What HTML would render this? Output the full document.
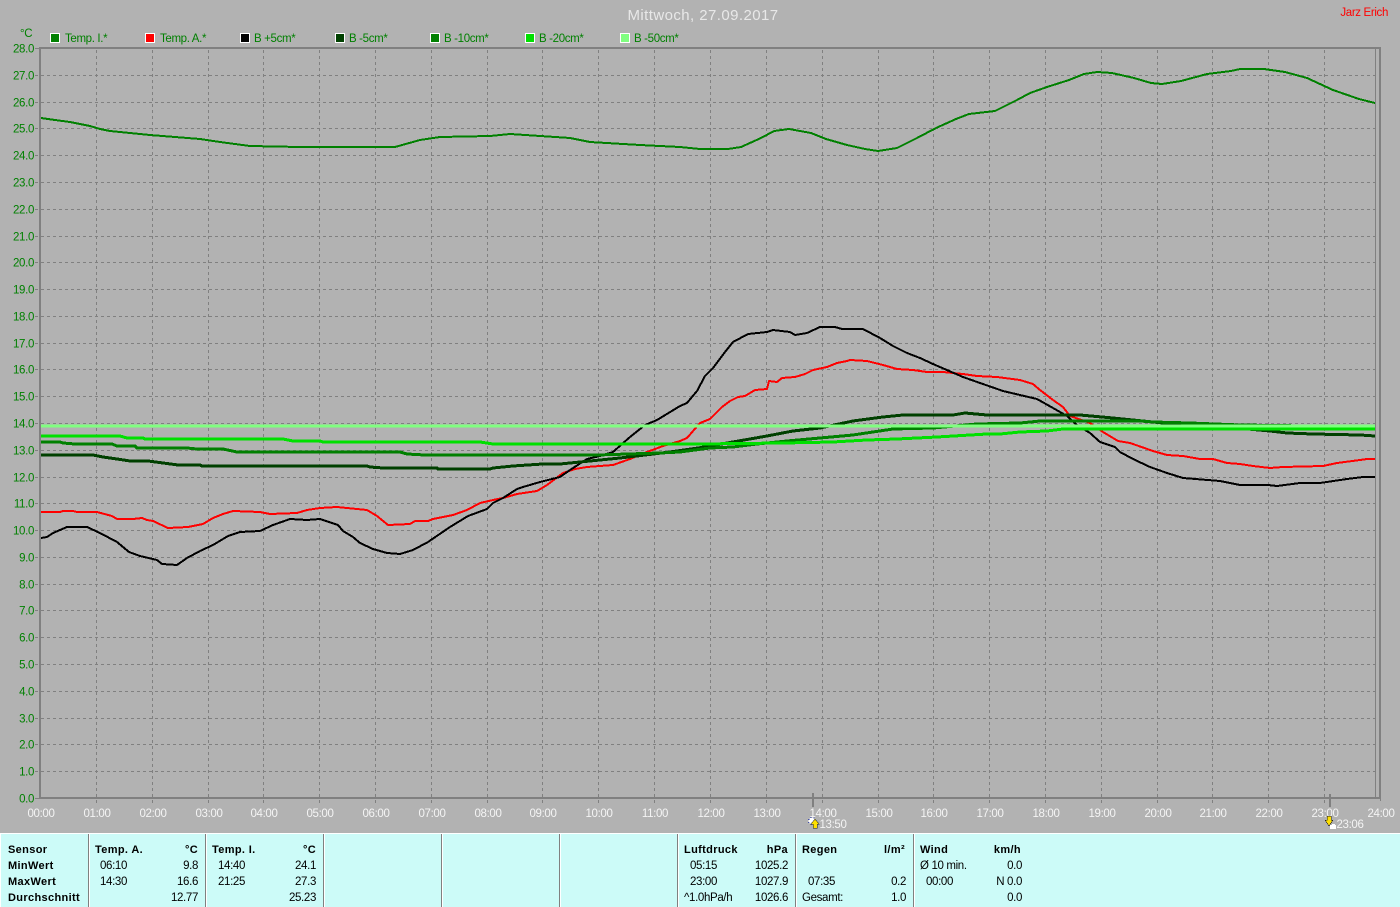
<!DOCTYPE html>
<html><head><meta charset="utf-8"><title>Mittwoch, 27.09.2017</title>
<style>
html,body{margin:0;padding:0;background:#b2b2b2;width:1400px;height:907px;overflow:hidden}
svg{display:block;position:absolute;left:0;top:0}
text{font-family:"Liberation Sans",sans-serif;font-size:11.5px;letter-spacing:-.35px}
.y text,.l text{fill:#008000}
.t text{fill:#f4f4f4;text-anchor:middle}
.y text{text-anchor:end}
.c polyline{fill:none;shape-rendering:crispEdges;stroke-linejoin:round}
.p text{fill:#000}
.p .b{font-weight:bold;letter-spacing:.35px;font-size:11px}
.p .r{text-anchor:end}
</style></head><body>
<svg width="1400" height="907" viewBox="0 0 1400 907" xmlns="http://www.w3.org/2000/svg">
<rect width="1400" height="907" fill="#b2b2b2"/>
<!-- grid -->
<path shape-rendering="crispEdges" stroke="#808080" stroke-width="1" stroke-dasharray="3 3" fill="none" d="
M35 75.5H1380M35 102.5H1380M35 128.5H1380M35 155.5H1380M35 182.5H1380M35 209.5H1380M35 236.5H1380M35 262.5H1380M35 289.5H1380M35 316.5H1380M35 343.5H1380M35 369.5H1380M35 396.5H1380M35 423.5H1380M35 450.5H1380M35 477.5H1380M35 503.5H1380M35 530.5H1380M35 557.5H1380M35 584.5H1380M35 610.5H1380M35 637.5H1380M35 664.5H1380M35 691.5H1380M35 718.5H1380M35 744.5H1380M35 771.5H1380
M96.5 50V803M152.5 50V803M208.5 50V803M263.5 50V803M319.5 50V803M375.5 50V803M431.5 50V803M487.5 50V803M542.5 50V803M598.5 50V803M654.5 50V803M710.5 50V803M766.5 50V803M822.5 50V803M878.5 50V803M933.5 50V803M989.5 50V803M1045.5 50V803M1101.5 50V803M1157.5 50V803M1212.5 50V803M1268.5 50V803M1324.5 50V803M1380.5 798V803"/>
<path shape-rendering="crispEdges" stroke="#808080" stroke-width="1" fill="none" d="M35 48.5H39M35 798.5H39M1375.5 48V798"/>
<path shape-rendering="crispEdges" fill="#808080" d="M39 47H1381V49H41V797H1379V49H1381V799H39Z"/>
<!-- curves -->
<g class="c">
<polyline stroke="#008000" stroke-width="2" points="41,118 55,120 70,122 90,126 100,129 110,131 150,135 200,139 220,142 250,146 300,147 395,147 420,140 440,137 490,136 510,134 540,136 570,138 590,142 640,145 680,147 700,149 728,149 741,147 761,138 774,131 789,129 811,133 826,139 847,145 865,149 878,151 897,148 917,138 936,128 956,119 969,114 995,111 1017,100 1030,93 1047,87 1069,80 1084,74 1097,72 1112,73 1134,78 1151,83 1162,84 1181,81 1207,74 1231,71 1240,69 1264,69 1285,72 1307,78 1333,90 1359,99 1375,103"/>
<polyline stroke="#ff0000" stroke-width="2" points="41,512 60,512 63,511 73,511 77,512 97,512 112,516 117,519 133,519 142,518 147,520 153,521 168,528 188,527 203,524 213,518 223,514 233,511 260,512 270,514 297,513 307,510 320,508 337,507 357,509 367,510 377,516 388,525 410,524 415,521 428,521 433,519 453,515 467,510 480,503 493,500 503,498 517,494 537,491 547,485 563,473 575,469 587,467 613,465 630,459 647,452 663,446 680,441 687,438 700,423 710,419 722,407 730,401 738,397 745,396 755,390 767,389 769,381 777,382 782,378 795,377 805,374 813,370 827,367 837,363 847,361 850,360 867,361 883,365 897,369 913,370 927,372 943,372 963,374 977,376 997,377 1020,380 1033,384 1040,390 1053,400 1063,407 1070,416 1090,423 1103,432 1118,441 1130,443 1153,451 1167,455 1183,456 1200,459 1213,459 1227,463 1240,464 1253,466 1270,468 1283,467 1323,466 1337,463 1360,460 1367,459 1375,459"/>
<polyline stroke="#000000" stroke-width="2" points="41,538 47,537 53,533 67,527 87,527 100,533 117,542 129,552 140,556 157,560 162,564 177,565 187,558 200,551 213,545 228,536 240,532 260,531 273,525 290,519 307,520 320,519 338,525 343,531 353,537 360,543 373,549 387,553 400,554 413,550 428,542 450,527 468,516 487,509 493,503 503,498 517,489 523,487 540,482 560,477 570,470 587,459 600,456 613,452 630,437 645,425 657,420 680,406 687,403 697,391 705,376 713,368 725,352 733,342 748,334 767,332 773,330 790,332 795,335 807,333 820,327 835,327 842,329 863,329 880,338 893,346 907,353 920,358 933,364 963,377 980,383 1003,391 1020,395 1037,399 1053,408 1067,416 1077,425 1090,433 1100,442 1115,447 1120,452 1133,459 1150,467 1167,473 1183,478 1220,481 1240,485 1268,485 1277,486 1300,483 1320,483 1347,479 1363,477 1375,477"/>
<polyline stroke="#004000" stroke-width="3" points="41,455 93,455 103,457 117,459 130,461 148,461 163,463 178,465 200,465 202,466 367,466 370,467 383,468 437,468 438,469 490,469 493,468 513,466 543,464 560,464 580,462 620,458 670,452 698,448 727,443 767,436 793,431 820,428 853,421 883,417 903,415 953,415 965,413 987,415 1080,415 1113,418 1143,421 1173,424 1237,428 1270,431 1287,433 1313,434 1360,435 1375,436"/>
<polyline stroke="#008000" stroke-width="3" points="41,442 60,442 63,443 75,444 112,444 117,446 135,446 137,448 187,448 197,449 223,449 237,452 400,452 407,454 425,455 597,455 660,453 680,452 710,448 733,447 757,444 787,441 820,438 853,435 893,429 933,428 977,424 1020,423 1040,421 1140,421 1153,422 1190,423 1240,425 1375,427"/>
<polyline stroke="#00e000" stroke-width="3" points="41,436 120,436 127,438 143,438 145,439 283,439 293,441 320,441 323,442 480,442 493,444 700,444 783,443 833,442 867,440 897,439 937,437 987,434 1000,434 1020,432 1047,431 1063,429 1375,429"/>
<polyline stroke="#80ff80" stroke-width="3" points="41,426 1375,426"/>
</g>
<!-- title -->
<text x="703" y="20" text-anchor="middle" fill="#e8e8e8" style="font-size:15px;letter-spacing:.42px">Mittwoch, 27.09.2017</text>
<text x="1388" y="16" text-anchor="end" fill="#ff0000">Jarz Erich</text>
<text x="20" y="37" fill="#008000">°C</text>
<!-- legend -->
<g shape-rendering="crispEdges" stroke="#fff" stroke-width="1">
<rect x="50.5" y="33.5" width="9" height="9" fill="#008000"/>
<rect x="145.5" y="33.5" width="9" height="9" fill="#ff0000"/>
<rect x="240.5" y="33.5" width="9" height="9" fill="#000000"/>
<rect x="335.5" y="33.5" width="9" height="9" fill="#004000"/>
<rect x="430.5" y="33.5" width="9" height="9" fill="#008000"/>
<rect x="525.5" y="33.5" width="9" height="9" fill="#00e000"/>
<rect x="620.5" y="33.5" width="9" height="9" fill="#80ff80"/>
</g>
<g class="l">
<text x="65" y="42">Temp. I.*</text>
<text x="160" y="42">Temp. A.*</text>
<text x="254" y="42">B +5cm*</text>
<text x="349" y="42">B -5cm*</text>
<text x="444" y="42">B -10cm*</text>
<text x="539" y="42">B -20cm*</text>
<text x="634" y="42">B -50cm*</text>
</g>
<!-- y labels -->
<g class="y">
<text x="34" y="52.5">28.0</text><text x="34" y="79.5">27.0</text><text x="34" y="106.5">26.0</text><text x="34" y="132.5">25.0</text><text x="34" y="159.5">24.0</text><text x="34" y="186.5">23.0</text><text x="34" y="213.5">22.0</text><text x="34" y="240.5">21.0</text><text x="34" y="266.5">20.0</text><text x="34" y="293.5">19.0</text><text x="34" y="320.5">18.0</text><text x="34" y="347.5">17.0</text><text x="34" y="373.5">16.0</text><text x="34" y="400.5">15.0</text><text x="34" y="427.5">14.0</text><text x="34" y="454.5">13.0</text><text x="34" y="481.5">12.0</text><text x="34" y="507.5">11.0</text><text x="34" y="534.5">10.0</text><text x="34" y="561.5">9.0</text><text x="34" y="588.5">8.0</text><text x="34" y="614.5">7.0</text><text x="34" y="641.5">6.0</text><text x="34" y="668.5">5.0</text><text x="34" y="695.5">4.0</text><text x="34" y="722.5">3.0</text><text x="34" y="748.5">2.0</text><text x="34" y="775.5">1.0</text><text x="34" y="802.5">0.0</text>
</g>
<!-- x labels -->
<g class="t">
<text x="41" y="817">00:00</text><text x="97" y="817">01:00</text><text x="153" y="817">02:00</text><text x="209" y="817">03:00</text><text x="264" y="817">04:00</text><text x="320" y="817">05:00</text><text x="376" y="817">06:00</text><text x="432" y="817">07:00</text><text x="488" y="817">08:00</text><text x="543" y="817">09:00</text><text x="599" y="817">10:00</text><text x="655" y="817">11:00</text><text x="711" y="817">12:00</text><text x="767" y="817">13:00</text><text x="823" y="817">14:00</text><text x="879" y="817">15:00</text><text x="934" y="817">16:00</text><text x="990" y="817">17:00</text><text x="1046" y="817">18:00</text><text x="1102" y="817">19:00</text><text x="1158" y="817">20:00</text><text x="1213" y="817">21:00</text><text x="1269" y="817">22:00</text><text x="1325" y="817">23:00</text><text x="1381" y="817">24:00</text>
<text x="833" y="828">13:50</text><text x="1350" y="828">23:06</text>
</g>
<!-- sunrise/sunset -->
<g shape-rendering="crispEdges">
<rect x="812" y="793" width="2" height="14" fill="#808080"/>
<rect x="1329" y="794" width="2" height="13" fill="#808080"/>
<circle cx="812" cy="821" r="3.5" fill="#fff" stroke="#2030a0" stroke-width="1" stroke-dasharray="1 2"/>
<path d="M815 819l4 5h-2v4h-4v-4h-2z" fill="#ffe000" stroke="#222" stroke-width=".5"/>
<path d="M1327 816h4v4h2l-4 6-4-6h2z" fill="#ffe000" stroke="#222" stroke-width=".5"/>
<rect x="1330" y="825" width="6" height="4" fill="#fff"/>
<rect x="1332" y="824" width="3" height="1" fill="#fff"/>
</g>
<!-- panel -->
<rect x="0" y="833" width="1400" height="74" fill="#ffffff" shape-rendering="crispEdges"/>
<rect x="1" y="834" width="1399" height="73" fill="#ccfbf8" shape-rendering="crispEdges"/>
<path shape-rendering="crispEdges" stroke="#808080" d="M88.5 834V907M205.5 834V907M323.5 834V907M441.5 834V907M559.5 834V907M677.5 834V907M795.5 834V907M913.5 834V907"/>
<path shape-rendering="crispEdges" stroke="#ffffff" d="M89.5 834V907M206.5 834V907M324.5 834V907M442.5 834V907M560.5 834V907M678.5 834V907M796.5 834V907M914.5 834V907"/>
<g class="p">
<text class="b" x="8" y="853">Sensor</text><text class="b" x="8" y="869">MinWert</text><text class="b" x="8" y="885">MaxWert</text><text class="b" x="8" y="901">Durchschnitt</text>
<text class="b" x="95" y="853">Temp. A.</text><text class="b r" x="198" y="853">°C</text>
<text x="100" y="869">06:10</text><text class="r" x="198" y="869">9.8</text>
<text x="100" y="885">14:30</text><text class="r" x="198" y="885">16.6</text>
<text class="r" x="198" y="901">12.77</text>
<text class="b" x="212" y="853">Temp. I.</text><text class="b r" x="316" y="853">°C</text>
<text x="218" y="869">14:40</text><text class="r" x="316" y="869">24.1</text>
<text x="218" y="885">21:25</text><text class="r" x="316" y="885">27.3</text>
<text class="r" x="316" y="901">25.23</text>
<text class="b" x="684" y="853">Luftdruck</text><text class="b r" x="788" y="853">hPa</text>
<text x="690" y="869">05:15</text><text class="r" x="788" y="869">1025.2</text>
<text x="690" y="885">23:00</text><text class="r" x="788" y="885">1027.9</text>
<text x="684" y="901">^1.0hPa/h</text><text class="r" x="788" y="901">1026.6</text>
<text class="b" x="802" y="853">Regen</text><text class="b r" x="905" y="853">l/m²</text>
<text x="808" y="885">07:35</text><text class="r" x="906" y="885">0.2</text>
<text x="802" y="901">Gesamt:</text><text class="r" x="906" y="901">1.0</text>
<text class="b" x="920" y="853">Wind</text><text class="b r" x="1021" y="853">km/h</text>
<text x="920" y="869">Ø 10 min.</text><text class="r" x="1022" y="869">0.0</text>
<text x="926" y="885">00:00</text><text class="r" x="1022" y="885">N 0.0</text>
<text class="r" x="1022" y="901">0.0</text>
</g>
</svg>
</body></html>
